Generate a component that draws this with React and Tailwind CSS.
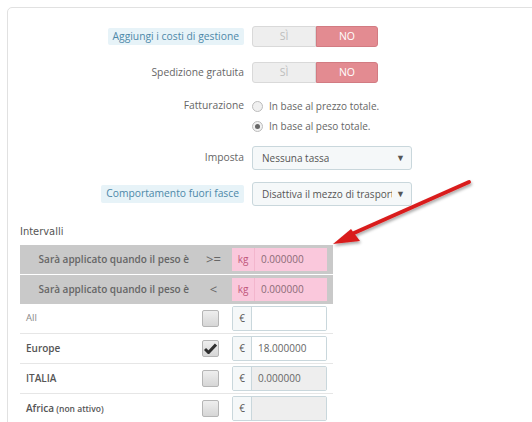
import React from 'react';

const sans = { fontFamily: '"Open Sans", "Liberation Sans", sans-serif' };

const Toggle = () => (
    <div className="flex h-[21px] w-[126px] text-[10.5px]">
        <div className="flex w-[64px] items-center justify-center rounded-l-[3px] border border-[#d9d9d9] bg-[#eeeeee] text-[#bdbdbd]">
            SÌ
        </div>
        <div className="flex w-[62px] items-center justify-center rounded-r-[3px] border border-[#d27b82] bg-[#e38b91] text-white">
            NO
        </div>
    </div>
);

const Radio = ({ checked, label }) => (
    <div className="flex h-[20px] items-center gap-[6px] text-[10px] text-[#666]">
        <span className="flex h-[11px] w-[11px] items-center justify-center rounded-full border border-[#bcbcbc] bg-[#f0f0f0]">
            {checked && <span className="h-[5px] w-[5px] rounded-full bg-[#666]" />}
        </span>
        {label}
    </div>
);

const Select = ({ value }) => (
    <div className="flex h-[24px] w-[160px] items-center justify-between rounded-[3px] border border-[#c9d7dc] bg-[#f5f8f9] pl-[9px] pr-[6px] text-[10px] text-[#555]">
        <span className="overflow-hidden whitespace-nowrap">{value}</span>
        <span className="ml-1 text-[9px] text-[#555]">▼</span>
    </div>
);

const Label = ({ children, hint }) => (
    <span
        className={
            hint
                ? 'rounded-[2px] bg-[#e7f3f8] px-[5px] py-[1px] text-[10.3px] text-[#4d88a8]'
                : 'py-[1px] text-[10.3px] text-[#666]'
        }
    >
        {children}
    </span>
);

const GrayRow = ({ op }) => (
    <div className="flex h-[29px] items-center bg-[#c9c9c9]">
        <div className="w-[175px] pr-[6px] text-right text-[10px] font-semibold text-[#666]">Sarà applicato quando il peso è</div>
        <div className="w-[37px] text-center text-[13px] text-[#666]">{op}</div>
        <div className="flex h-[23px] w-[95px] bg-[#fac8dc] text-[10px]">
            <span className="flex w-[23px] items-center justify-center border-r border-[#f3b6cd] text-[#c0567a]">kg</span>
            <span className="flex items-center pl-[6px] text-[#8a6a76]">0.000000</span>
        </div>
    </div>
);

const ZoneRow = ({ name, extra, checked, value, disabled, light }) => (
    <div className="flex h-[30px] items-center border-b border-[#e6e6e6]">
        <div className={light ? 'w-[182px] pl-[6px] text-[9.5px] text-[#888]' : 'w-[182px] pl-[6px] text-[10px] font-semibold text-[#555]'}>
            {name}
            {extra && <span className="text-[8.5px]"> {extra}</span>}
        </div>
        <div className="flex h-[17px] w-[17px] items-center justify-center rounded-[2px] border border-[#b5b5b5] bg-gradient-to-b from-[#eeeeee] to-[#d6d6d6]">
            {checked && (
                <svg width="13" height="11" viewBox="0 0 13 11">
                    <path d="M1 6 L4.5 9.5 L12 1.5" fill="none" stroke="#2f2f2f" strokeWidth="3" />
                </svg>
            )}
        </div>
        <div className="ml-[13px] flex h-[25px] w-[95px] overflow-hidden rounded-[2px] border border-[#c9d7dc] text-[10px]">
            <span className="flex w-[19px] items-center justify-center border-r border-[#c9d7dc] bg-[#f5f8f9] text-[#555]">€</span>
            <span className={'flex flex-1 items-center pl-[6px] text-[#666] ' + (disabled ? 'bg-[#eeeeee]' : 'bg-white')}>{value}</span>
        </div>
    </div>
);

export default function App() {
    return (
        <div className="relative h-[422px] w-[532px] overflow-hidden bg-white" style={sans}>
            <div className="ml-[7px] mt-[7px] w-[580px] rounded-[5px] border border-[#e1e1e1] pb-6 pt-[18px]">
                {/* settings form */}
                <div className="grid grid-cols-[236px_1fr] gap-x-2">
                    <div className="flex items-center justify-end">
                        <Label hint>Aggiungi i costi di gestione</Label>
                    </div>
                    <Toggle />

                    <div className="mt-[15px] flex items-center justify-end">
                        <Label>Spedizione gratuita</Label>
                    </div>
                    <div className="mt-[15px]">
                        <Toggle />
                    </div>

                    <div className="mt-[13px] flex h-[20px] items-center justify-end">
                        <Label>Fatturazione</Label>
                    </div>
                    <div className="mt-[13px]">
                        <Radio label="In base al prezzo totale." />
                        <Radio checked label="In base al peso totale." />
                    </div>

                    <div className="mt-[10px] flex items-center justify-end">
                        <Label>Imposta</Label>
                    </div>
                    <div className="mt-[10px]">
                        <Select value="Nessuna tassa" />
                    </div>

                    <div className="mt-[12px] flex items-center justify-end">
                        <Label hint>Comportamento fuori fasce</Label>
                    </div>
                    <div className="mt-[12px]">
                        <Select value="Disattiva il mezzo di trasport" />
                    </div>
                </div>

                {/* ranges */}
                <div className="pl-[12px]">
                    <div
                        className="mt-[18px] h-[16px] text-[11px] leading-[16px] text-[#555]"
                        style={{ fontFamily: '"DejaVu Sans Condensed", "Liberation Sans Narrow", sans-serif', fontStretch: 'condensed' }}
                    >
                        Intervalli
                    </div>
                    <div className="mt-[5px] w-[313px]">
                        <GrayRow op=">=" />
                        <div className="h-px bg-white" />
                        <GrayRow op="<" />
                        <ZoneRow name="All" light value="" />
                        <ZoneRow name="Europe" checked value="18.000000" />
                        <ZoneRow name="ITALIA" value="0.000000" disabled />
                        <ZoneRow name="Africa" extra="(non attivo)" value="" disabled />
                    </div>
                </div>
            </div>

            {/* red annotation arrow */}
            <svg className="pointer-events-none absolute left-0 top-0" width="532" height="422">
                <defs>
                    <filter id="sh" x="-20%" y="-20%" width="140%" height="140%">
                        <feDropShadow dx="1" dy="2" stdDeviation="1.5" floodColor="#000" floodOpacity="0.35" />
                    </filter>
                </defs>
                <g filter="url(#sh)" fill="#d91e1e">
                    <path d="M469 182 L354 233" stroke="#d91e1e" strokeWidth="4" strokeLinecap="round" />
                    <path d="M333 244 L351 229 L360 241 Z" />
                </g>
            </svg>
        </div>
    );
}
